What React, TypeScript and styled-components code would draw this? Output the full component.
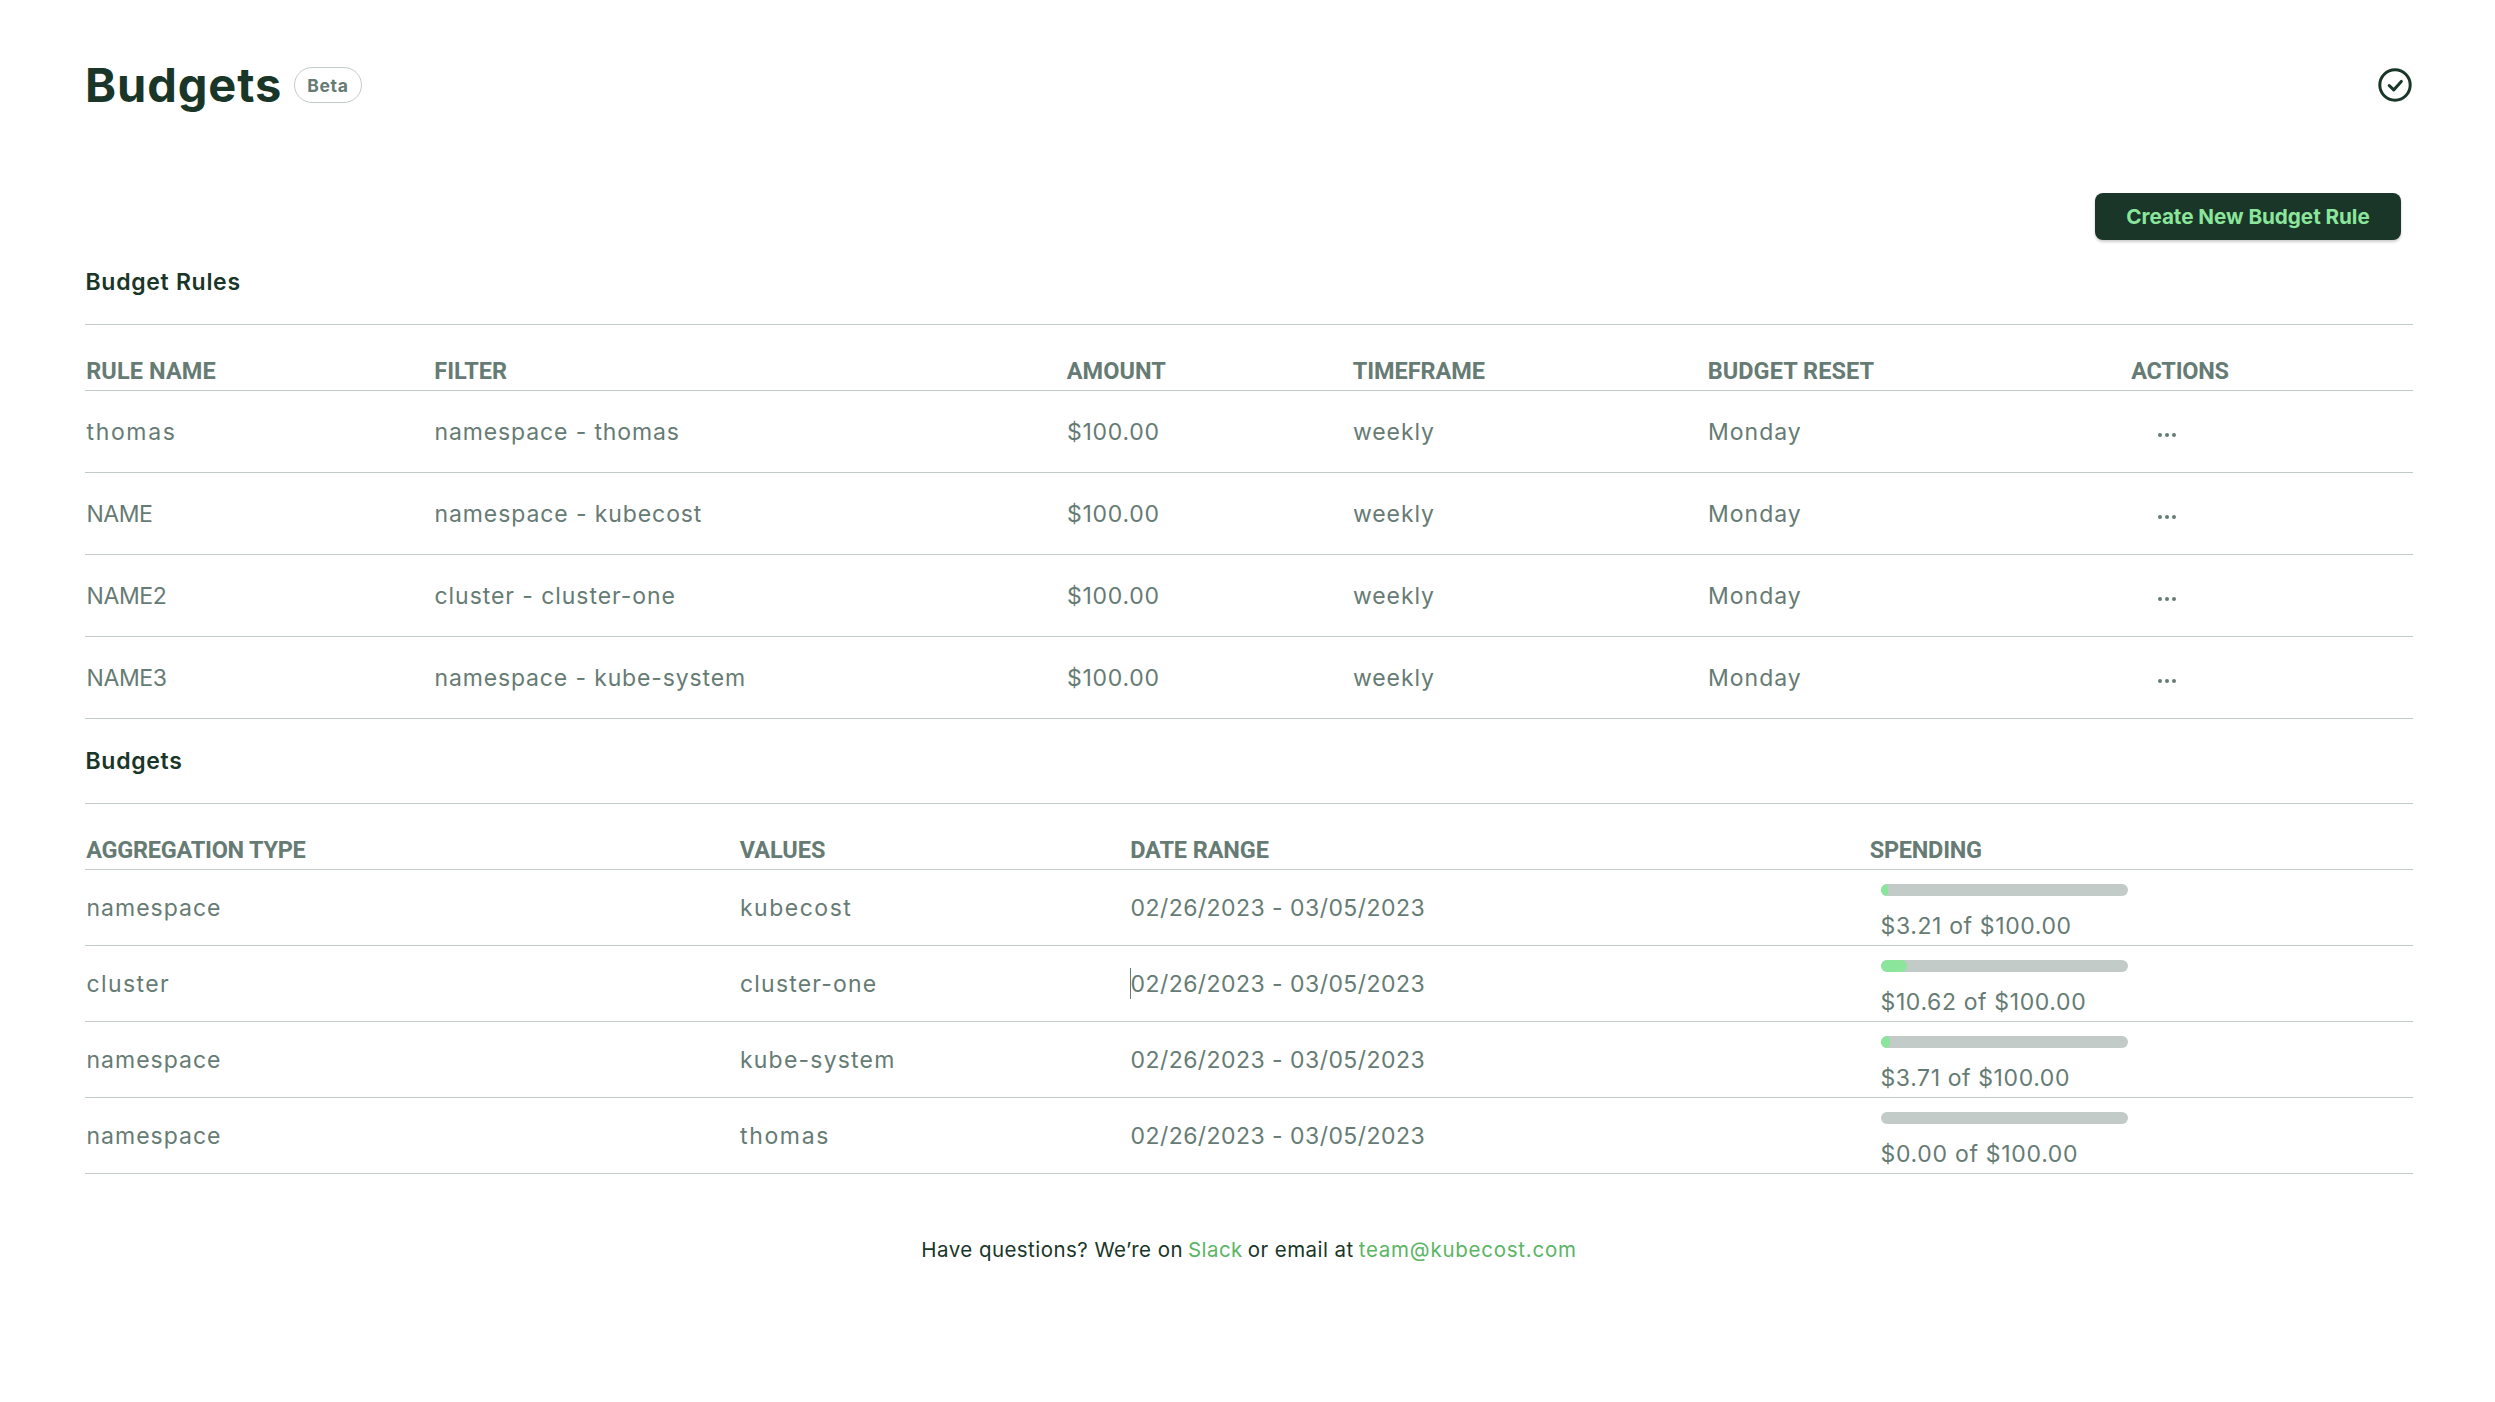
import React from 'react';
import styled, { createGlobalStyle } from 'styled-components';

const dark = '#193628';
const gray = '#667b74';
const line = '#c2cbc8';
const mint = '#8be59b';

const GlobalStyle = createGlobalStyle`
  * { box-sizing: border-box; }
  body { margin: 0; background: #fff; font-family: Inter, "Liberation Sans", sans-serif; color: ${dark}; }
`;

const Page = styled.main`
  display: flex;
  flex-direction: column;
  min-height: 1402px;
  padding: 60px 82px 0 85px;
`;

const Header = styled.header`
  display: flex;
  align-items: center;
  height: 50px;
`;

const Title = styled.h1`
  margin: 0;
  font-size: 47px;
  line-height: 50px;
  font-weight: 650;
  letter-spacing: 0.9px;
  padding-right: 0.7px;
`;

const Badge = styled.span`
  display: flex;
  align-items: center;
  justify-content: center;
  width: 68px;
  height: 36px;
  margin-left: 11px;
  border: 1px solid ${line};
  border-radius: 18px;
  color: ${gray};
  font-size: 17.5px;
  font-weight: 700;
  letter-spacing: 0.7px;
`;

const StatusIcon = styled.svg`
  width: 36px;
  height: 36px;
  margin-left: auto;
`;

const Toolbar = styled.div`
  display: flex;
  justify-content: flex-end;
  padding: 83px 12px 0 0;
`;

const CreateButton = styled.button`
  width: 306px;
  height: 47px;
  padding: 0;
  border: 0;
  border-radius: 8px;
  background: ${dark};
  color: ${mint};
  font: 650 20.7px Inter, "Liberation Sans", sans-serif;
  letter-spacing: -0.05px;
  box-shadow: 0 2px 3px rgba(0, 0, 0, 0.2);
`;

const SectionTitle = styled.h2`
  display: flex;
  align-items: center;
  height: 85px;
  margin: 0;
  padding-left: 0.5px;
  border-bottom: 1px solid ${line};
  font-size: 23px;
  font-weight: 600;
  letter-spacing: 0.7px;
`;

const Row = styled.div<{ $cols: string; $height: number }>`
  display: grid;
  grid-template-columns: ${p => p.$cols};
  height: ${p => p.$height}px;
  border-bottom: 1px solid ${line};
  color: ${gray};
`;

const HeadCell = styled.div<{ $track: number }>`
  align-self: end;
  padding: 0 0 4px 1.2px;
  font: 700 23.5px/30px Roboto, "Liberation Sans", sans-serif;
  letter-spacing: ${p => p.$track}px;
  white-space: nowrap;
`;

const Cell = styled.div<{ $track: number }>`
  position: relative;
  display: flex;
  align-items: center;
  padding-left: 1.5px;
  font-size: 23px;
  font-weight: 370;
  letter-spacing: ${p => p.$track}px;
  white-space: nowrap;
`;

const Caret = styled.i`
  position: absolute;
  left: 1px;
  top: 22px;
  width: 1px;
  height: 31px;
  background: ${gray};
`;

const Menu = styled.div`
  display: flex;
  align-items: center;
  gap: 3px;
  padding: 7px 0 0 28px;
`;

const Dot = styled.i`
  width: 4px;
  height: 4px;
  border-radius: 50%;
  background: ${gray};
`;

const Spending = styled.div`
  padding: 14px 0 0 12px;
`;

const Track = styled.div`
  width: 247px;
  height: 12px;
  overflow: hidden;
  border-radius: 6px;
  background: ${line};
`;

const Fill = styled.div`
  height: 12px;
  border-radius: 6px;
  background: ${mint};
`;

const Amount = styled.div<{ $track: number }>`
  margin-top: 15px;
  font-size: 23px;
  line-height: 30px;
  font-weight: 370;
  letter-spacing: ${p => p.$track}px;
  white-space: nowrap;
`;

const Footer = styled.footer`
  display: flex;
  justify-content: center;
  gap: 5px;
  padding-top: 61px;
  font-size: 20.5px;
  line-height: 30px;
  font-weight: 370;
  letter-spacing: 0.45px;
`;

const FooterLink = styled.a<{ $track: number }>`
  color: #5bb565;
  font-weight: 400;
  letter-spacing: ${p => p.$track}px;
`;

type Text = [string, number];

const ruleCols = '348px 632.5px 286px 355px 423.5px 1fr';
const ruleHead: Text[] = [['RULE NAME', 0.1], ['FILTER', 0.05], ['AMOUNT', 0.05], ['TIMEFRAME', -0.05], ['BUDGET RESET', 0.05], ['ACTIONS', -0.25]];
const rules: [Text, Text][] = [
  [['thomas', 1.65], ['namespace - thomas', 0.87]],
  [['NAME', -0.5], ['namespace - kubecost', 0.9]],
  [['NAME2', -0.4], ['cluster - cluster-one', 0.94]],
  [['NAME3', -0.4], ['namespace - kube-system', 0.85]],
];

const budgetCols = '653.5px 390.5px 739.5px 1fr';
const budgetHead: Text[] = [['AGGREGATION TYPE', -0.25], ['VALUES', 0], ['DATE RANGE', -0.1], ['SPENDING', -0.25]];
const budgets: { type: Text; value: Text; spent: number; text: Text; caret?: boolean }[] = [
  { type: ['namespace', 1], value: ['kubecost', 1.5], spent: 3.21, text: ['$3.21 of $100.00', 0.62] },
  { type: ['cluster', 1.4], value: ['cluster-one', 1.2], spent: 10.62, text: ['$10.62 of $100.00', 0.62], caret: true },
  { type: ['namespace', 1], value: ['kube-system', 1.2], spent: 3.71, text: ['$3.71 of $100.00', 0.6] },
  { type: ['namespace', 1], value: ['thomas', 1.65], spent: 0, text: ['$0.00 of $100.00', 0.7] },
];

function Heads({ cols, items }: { cols: string; items: Text[] }) {
  return (
    <Row $cols={cols} $height={66}>
      {items.map(([t, k]) => <HeadCell key={t} $track={k}>{t}</HeadCell>)}
    </Row>
  );
}

export default function App() {
  return (
    <>
      <GlobalStyle />
      <Page>
        <Header>
          <Title>Budgets</Title>
          <Badge>Beta</Badge>
          <StatusIcon viewBox="0 0 36 36" fill="none" stroke={dark} strokeWidth="3" strokeLinecap="round" strokeLinejoin="round">
            <circle cx="18" cy="18" r="15.2" />
            <path d="M12.2 18.5 16.7 22.9 24.3 14.4" />
          </StatusIcon>
        </Header>
        <Toolbar>
          <CreateButton>Create New Budget Rule</CreateButton>
        </Toolbar>

        <SectionTitle>Budget Rules</SectionTitle>
        <Heads cols={ruleCols} items={ruleHead} />
        {rules.map(([name, filter]) => (
          <Row key={name[0]} $cols={ruleCols} $height={82}>
            <Cell $track={name[1]}>{name[0]}</Cell>
            <Cell $track={filter[1]}>{filter[0]}</Cell>
            <Cell $track={0.75}>$100.00</Cell>
            <Cell $track={0.9}>weekly</Cell>
            <Cell $track={1}>Monday</Cell>
            <Menu><Dot /><Dot /><Dot /></Menu>
          </Row>
        ))}

        <SectionTitle>Budgets</SectionTitle>
        <Heads cols={budgetCols} items={budgetHead} />
        {budgets.map(b => (
          <Row key={b.value[0]} $cols={budgetCols} $height={76}>
            <Cell $track={b.type[1]}>{b.type[0]}</Cell>
            <Cell $track={b.value[1]}>{b.value[0]}</Cell>
            <Cell $track={0.45}>{b.caret && <Caret />}02/26/2023 - 03/05/2023</Cell>
            <Spending>
              <Track><Fill style={{ width: `${b.spent}%` }} /></Track>
              <Amount $track={b.text[1]}>{b.text[0]}</Amount>
            </Spending>
          </Row>
        ))}

        <Footer>
          <span>Have questions? We’re on</span>
          <FooterLink $track={0.4}>Slack</FooterLink>
          <span>or email at</span>
          <FooterLink $track={0.75}>team@kubecost.com</FooterLink>
        </Footer>
      </Page>
    </>
  );
}
